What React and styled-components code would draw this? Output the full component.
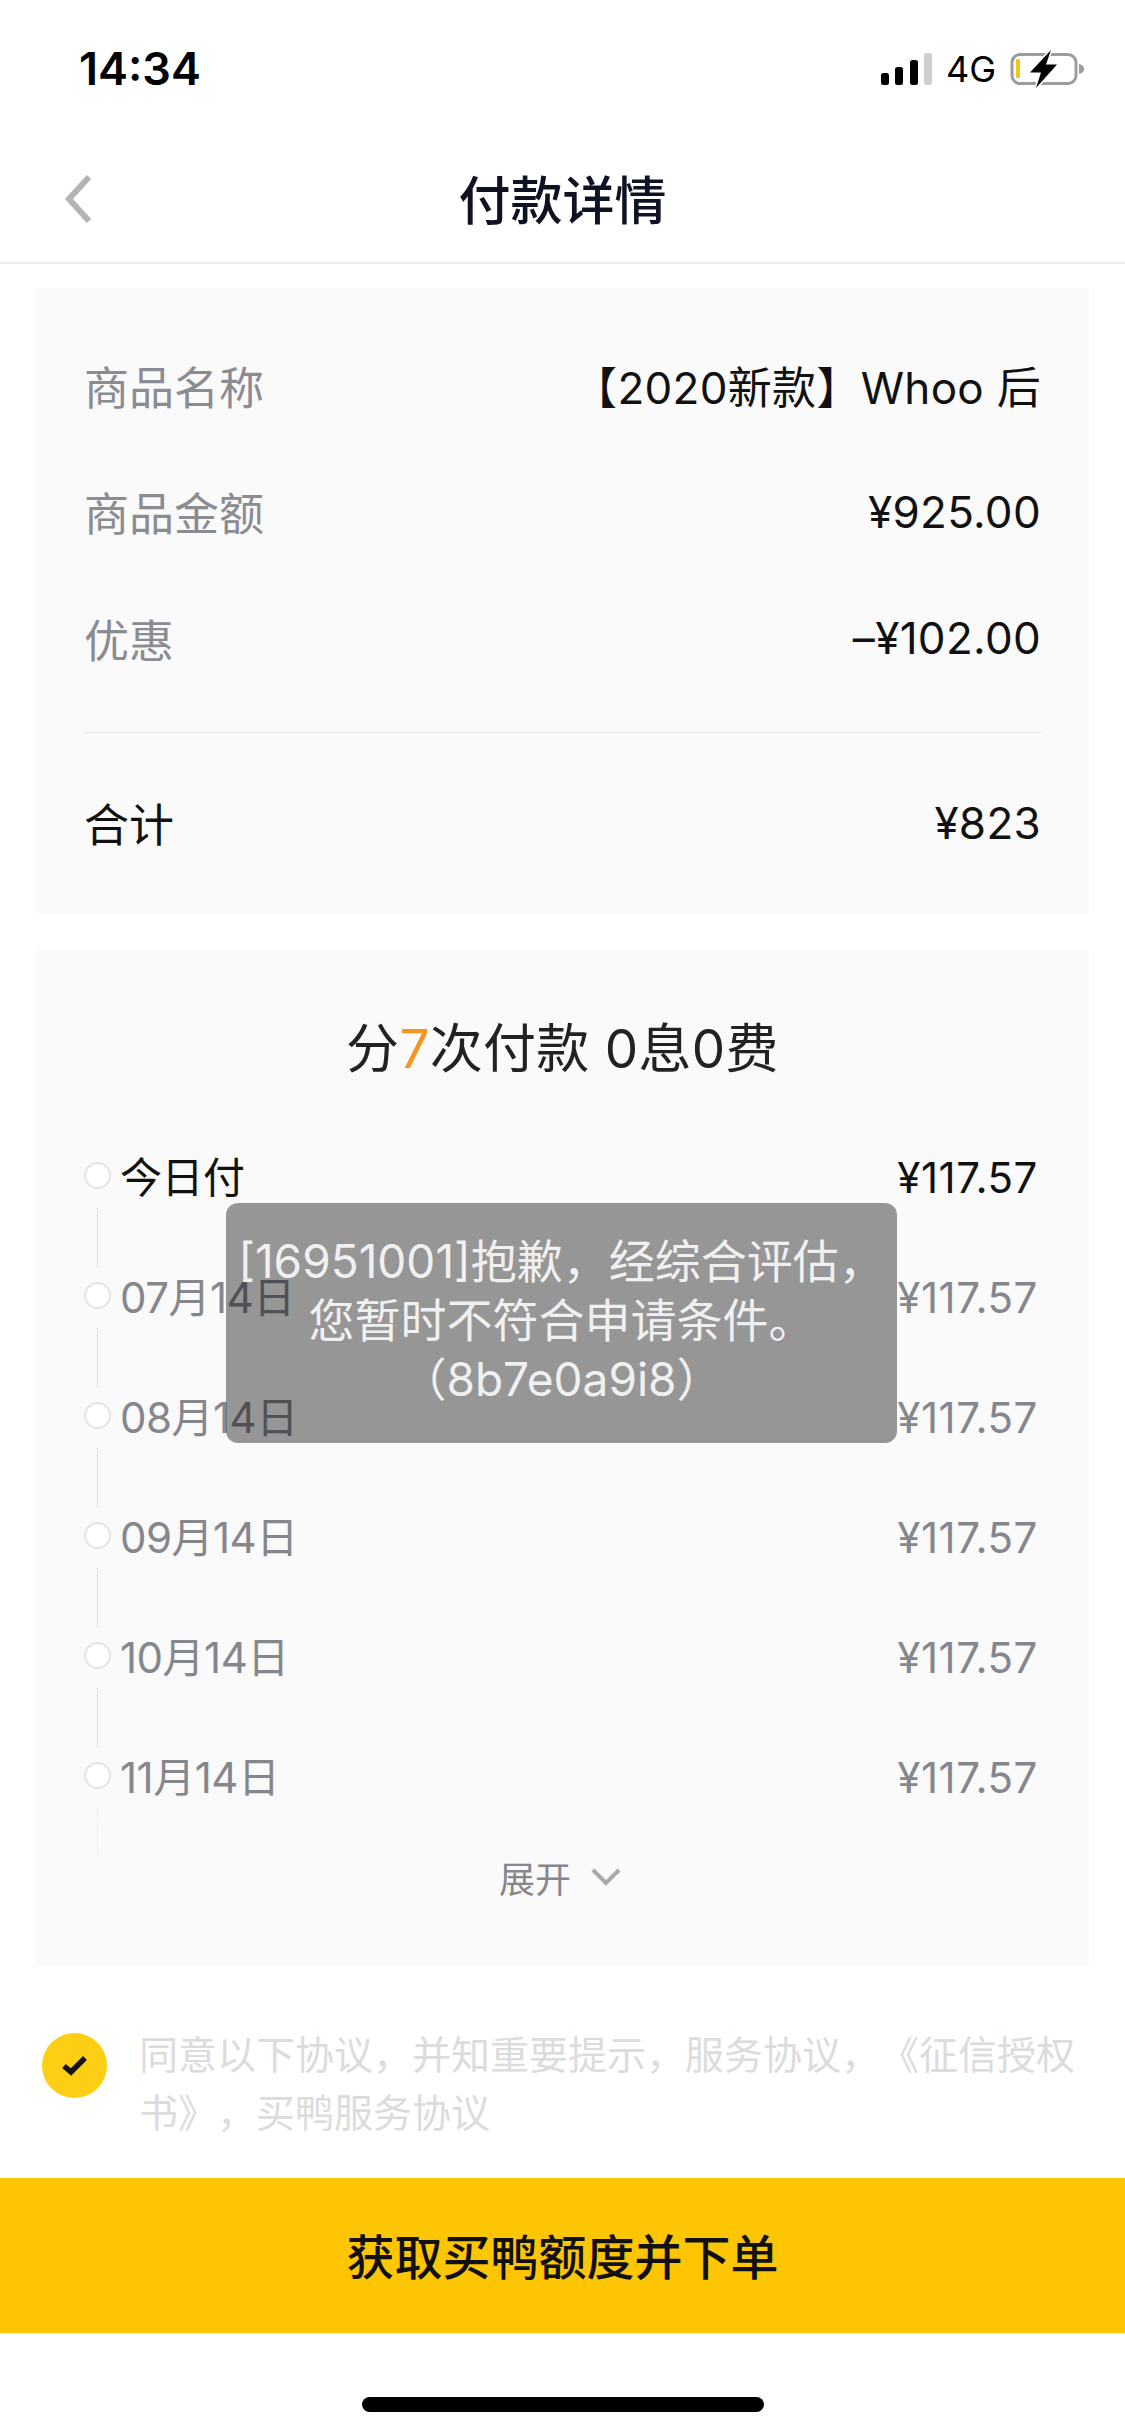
import React from 'react';
import styled, { createGlobalStyle } from 'styled-components';

const sans = `Inter, "Noto Sans CJK SC", sans-serif`;

const GlobalStyle = createGlobalStyle`
  html, body {
    margin: 0;
    padding: 0;
    background: #fff;
  }
  * {
    box-sizing: border-box;
  }
`;

const Page = styled.div`
  position: relative;
  width: 1125px;
  height: 2436px;
  overflow: hidden;
  background: #fff;
  font-family: ${sans};
  text-spacing-trim: space-all;
  color: #111;
`;

const StatusBar = styled.div`
  display: flex;
  align-items: flex-start;
  justify-content: space-between;
  height: 135px;
  padding: 50px 39px 0 79px;
`;

const Time = styled.div`
  font-size: 45px;
  font-weight: 600;
  line-height: 38px;
  color: #000;
`;

const StatusIcons = styled.div`
  display: flex;
  align-items: center;
  height: 38px;
`;

const Network = styled.span`
  margin: 0 14px 0 13px;
  font-size: 36px;
  line-height: 38px;
  color: #000;
`;

const Nav = styled.div`
  display: grid;
  grid-template-columns: 1fr auto 1fr;
  align-items: center;
  height: 129px;
  padding-left: 62px;
  border-bottom: 2px solid #ececec;
`;

const Title = styled.div`
  padding-right: 62px;
  margin-top: -2px;
  font-size: 52px;
  font-weight: 500;
  color: #0e1222;
`;

const Main = styled.div`
  padding: 24px 36px 0;
`;

const Card = styled.section`
  background: #fafafa;
`;

const SummaryCard = styled(Card)`
  height: 625px;
  padding: 34px 48px 0;
`;

const PlanCard = styled(Card)`
  position: relative;
  height: 1015px;
  margin-top: 37px;
  padding: 49px 48px 0;
`;

const SummaryRow = styled.div`
  display: flex;
  align-items: center;
  justify-content: space-between;
  height: 126.5px;
  font-size: 45px;
`;

const SummaryLabel = styled.span`
  color: ${({ $strong }) => ($strong ? '#111' : '#8a8c92')};
`;

const SummaryValue = styled.span`
  font-size: 44px;
  letter-spacing: 0.3px;
  color: #111;
`;

const Divider = styled.div`
  height: 1px;
  margin: 30px 0 27px;
  background: #e6e6e6;
`;

const PlanTitle = styled.h2`
  margin: 0 0 59px;
  height: 100px;
  font-size: 53px;
  font-weight: 400;
  letter-spacing: 0.3px;
  line-height: 100px;
  text-align: center;
  color: #222;
`;

const Accent = styled.span`
  color: #f7941d;
`;

const Schedule = styled.div`
  display: flex;
  flex-direction: column;
`;

const ScheduleRow = styled.div`
  display: flex;
  height: 120px;
  font-size: 42px;
  line-height: 40px;
  color: ${({ $today }) => ($today ? '#111' : '#85878d')};

  &:last-child {
    height: 102px;
  }
`;

const Rail = styled.div`
  display: flex;
  flex-direction: column;
  align-items: center;
  width: 27px;
  margin-right: 9px;
  padding-top: 4px;
`;

const Dot = styled.div`
  flex: none;
  width: 27px;
  height: 27px;
  border: 2px solid #e4e4e4;
  border-radius: 50%;
  background: #fff;
`;

const Connector = styled.div`
  flex: none;
  height: 60px;
  margin-top: 19px;
  border-left: 1px dotted #c8c8c8;
`;

const RowDate = styled.span`
  flex: 1;
  letter-spacing: -0.5px;
`;

const RowAmount = styled.span`
  margin-right: 3px;
  letter-spacing: 0.6px;
`;

const Fade = styled.div`
  position: absolute;
  left: 0;
  right: 0;
  top: 845px;
  height: 90px;
  background: linear-gradient(to bottom, rgba(250, 250, 250, 0.35), #fafafa);
`;

const Expand = styled.div`
  position: relative;
  display: flex;
  align-items: center;
  justify-content: center;
  gap: 20px;
  height: 40px;
  margin-top: -3px;
  padding-right: 5px;
  font-size: 36px;
  color: #85878d;
`;

const Agreement = styled.div`
  display: flex;
  align-items: flex-start;
  height: 213px;
  padding: 61px 46px 0 42px;
`;

const Check = styled.div`
  flex: none;
  display: flex;
  align-items: center;
  justify-content: center;
  width: 65px;
  height: 65px;
  margin: 7px 32px 0 0;
  border-radius: 50%;
  background: #fdcf14;
`;

const AgreementText = styled.div`
  font-size: 39px;
  line-height: 58px;
  color: #dcdcdc;
`;

const SubmitButton = styled.button`
  display: block;
  width: 100%;
  height: 155px;
  padding: 0 0 3px;
  border: 0;
  background: #fec602;
  font-family: ${sans};
  font-size: 48px;
  font-weight: 500;
  color: #111;
`;

const HomeBar = styled.div`
  width: 402px;
  height: 15px;
  margin: 64px auto 0;
  border-radius: 8px;
  background: #000;
`;

const Toast = styled.div`
  position: absolute;
  left: 226px;
  top: 1203px;
  width: 671px;
  height: 240px;
  padding-top: 29px;
  border-radius: 12px;
  background: rgba(0, 0, 0, 0.4);
  font-size: 46px;
  line-height: 59px;
  text-align: center;
  color: #f0f0f0;
`;

const Signal = () => (
  <svg width="52" height="32" viewBox="0 0 52 32">
    <rect x="0" y="20" width="8" height="12" rx="2.5" fill="#000" />
    <rect x="14" y="14" width="8" height="18" rx="2.5" fill="#000" />
    <rect x="29" y="7" width="8" height="25" rx="2.5" fill="#000" />
    <rect x="43" y="0" width="8" height="32" rx="2.5" fill="#cfcfcf" />
  </svg>
);

const Battery = () => (
  <svg width="76" height="38" viewBox="0 0 76 38">
    <rect x="2" y="4.5" width="64" height="29" rx="8" fill="none" stroke="#9c9c9c" strokeWidth="3" />
    <path d="M69 14 C73 15 74 17 74 19 C74 21 73 23 69 24 Z" fill="#9c9c9c" />
    <rect x="6" y="9" width="4" height="19" rx="1" fill="#f6c514" />
    <path
      d="M41 0 L20 22.5 L31 22.5 L26 38 L47 14.5 L36 14.5 Z"
      fill="#000"
      stroke="#fff"
      strokeWidth="3"
      paintOrder="stroke"
    />
  </svg>
);

const BackIcon = () => (
  <svg width="30" height="48" viewBox="0 0 30 48">
    <polyline points="27,2 7,24 27,46" fill="none" stroke="#b4b4b4" strokeWidth="6" />
  </svg>
);

const ChevronDown = () => (
  <svg width="30" height="18" viewBox="0 0 30 18">
    <polyline points="2,2 15,15 28,2" fill="none" stroke="#a9a9a9" strokeWidth="4" />
  </svg>
);

const CheckIcon = () => (
  <svg width="27" height="21" viewBox="0 0 27 21">
    <polyline points="3,11 10,17 24,3" fill="none" stroke="#111" strokeWidth="5.5" />
  </svg>
);

const summary = [
  { label: '商品名称', value: '【2020新款】Whoo 后' },
  { label: '商品金额', value: '¥925.00' },
  { label: '优惠', value: '–¥102.00' },
];

const schedule = [
  { date: '今日付', today: true },
  { date: '07月14日' },
  { date: '08月14日' },
  { date: '09月14日' },
  { date: '10月14日' },
  { date: '11月14日' },
];

const App = () => (
  <Page>
    <GlobalStyle />
    <StatusBar>
      <Time>14:34</Time>
      <StatusIcons>
        <Signal />
        <Network>4G</Network>
        <Battery />
      </StatusIcons>
    </StatusBar>
    <Nav>
      <BackIcon />
      <Title>付款详情</Title>
    </Nav>
    <Main>
      <SummaryCard>
        {summary.map(item => (
          <SummaryRow key={item.label}>
            <SummaryLabel>{item.label}</SummaryLabel>
            <SummaryValue>{item.value}</SummaryValue>
          </SummaryRow>
        ))}
        <Divider />
        <SummaryRow>
          <SummaryLabel $strong>合计</SummaryLabel>
          <SummaryValue>¥823</SummaryValue>
        </SummaryRow>
      </SummaryCard>
      <PlanCard>
        <PlanTitle>
          分<Accent>7</Accent>次付款 0息0费
        </PlanTitle>
        <Schedule>
          {schedule.map(row => (
            <ScheduleRow key={row.date} $today={row.today}>
              <Rail>
                <Dot />
                <Connector />
              </Rail>
              <RowDate>{row.date}</RowDate>
              <RowAmount>¥117.57</RowAmount>
            </ScheduleRow>
          ))}
        </Schedule>
        <Fade />
        <Expand>
          展开
          <ChevronDown />
        </Expand>
      </PlanCard>
    </Main>
    <Agreement>
      <Check>
        <CheckIcon />
      </Check>
      <AgreementText>
        同意以下协议，并知重要提示，服务协议，《征信授权书》，买鸭服务协议
      </AgreementText>
    </Agreement>
    <SubmitButton>获取买鸭额度并下单</SubmitButton>
    <HomeBar />
    <Toast>
      [16951001]抱歉，经综合评估，
      <br />
      您暂时不符合申请条件。
      <br />
      （8b7e0a9i8）
    </Toast>
  </Page>
);

export default App;
